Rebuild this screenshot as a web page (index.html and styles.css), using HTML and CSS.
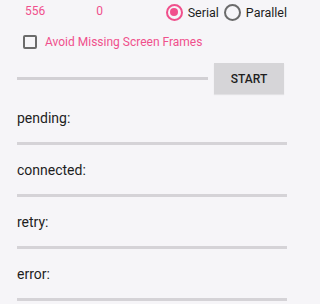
FILE: index.html
```html
<!DOCTYPE html>
<html>
<head>
<meta charset="utf-8">
<link rel="stylesheet" href="styles.css">
</head>
<body>
<div class="screen">
  <div class="top-row">
    <span class="count count-a">556</span>
    <span class="count count-b">0</span>
    <div class="radios">
      <span class="radio radio-on"></span>
      <span class="radio-label">Serial</span>
      <span class="radio"></span>
      <span class="radio-label">Parallel</span>
    </div>
  </div>
  <div class="check-row">
    <span class="checkbox"></span>
    <span class="check-label">Avoid Missing Screen Frames</span>
  </div>
  <div class="seek-row">
    <div class="seek-track"></div>
    <div class="btn">START</div>
  </div>
  <div class="field">
    <div class="field-label">pending:</div>
    <div class="field-line"></div>
  </div>
  <div class="field">
    <div class="field-label">connected:</div>
    <div class="field-line"></div>
  </div>
  <div class="field">
    <div class="field-label">retry:</div>
    <div class="field-line"></div>
  </div>
  <div class="field">
    <div class="field-label">error:</div>
    <div class="field-line"></div>
  </div>
</div>
</body>
</html>
```
FILE: styles.css
```css
html, body {
  margin: 0;
  padding: 0;
  background: #f6f5f8;
}
.screen {
  width: 304px;
  height: 304px;
  overflow: hidden;
  font-family: Roboto, "Liberation Sans", sans-serif;
  color: #1e1e1e;
}
.top-row {
  display: flex;
  align-items: center;
  height: 24px;
}
.count {
  font-size: 12px;
  color: #f0508c;
  margin-bottom: 3px;
}
.count-a {
  margin-left: 25px;
}
.count-b {
  margin-left: 51px;
}
.radios {
  display: flex;
  align-items: center;
  margin-left: auto;
  margin-right: 17px;
}
.radio {
  box-sizing: border-box;
  width: 17px;
  height: 17px;
  border: 2px solid #6b6b6b;
  border-radius: 50%;
  position: relative;
}
.radio-on {
  border-color: #f0508c;
}
.radio-on::after {
  content: "";
  position: absolute;
  left: 2.5px;
  top: 2.5px;
  width: 8px;
  height: 8px;
  border-radius: 50%;
  background: #f0508c;
}
.radio-label {
  font-size: 12.5px;
  color: #1e1e1e;
  margin-left: 5px;
  margin-right: 5px;
}
.radio-label:last-child {
  margin-right: 0;
}
.check-row {
  display: flex;
  align-items: center;
  height: 22px;
  margin-top: 7px;
  padding-left: 23px;
}
.checkbox {
  box-sizing: border-box;
  width: 14px;
  height: 14px;
  border: 2px solid #6b6b6b;
  border-radius: 2px;
}
.check-label {
  margin-left: 8px;
  font-size: 12px;
  color: #f0508c;
}
.seek-row {
  display: flex;
  align-items: center;
  margin-top: 10px;
  padding-left: 17px;
}
.seek-track {
  width: 191px;
  height: 3px;
  background: #d2d0d4;
}
.btn {
  margin-left: 6px;
  width: 70px;
  height: 31px;
  background: #d6d5d8;
  display: flex;
  align-items: center;
  justify-content: center;
  font-size: 12px;
  font-weight: 500;
  color: #1e1e1e;
  box-shadow: 0 1px 1px rgba(0,0,0,0.08);
}
.field {
  padding-left: 17px;
  height: 52px;
}
.field-label {
  font-size: 14px;
  line-height: 16px;
  color: #1e1e1e;
}
.field-line {
  margin-top: 16px;
  width: 270px;
  height: 3px;
  background: #d5d3d7;
}
.seek-row + .field {
  margin-top: 16px;
}
```
